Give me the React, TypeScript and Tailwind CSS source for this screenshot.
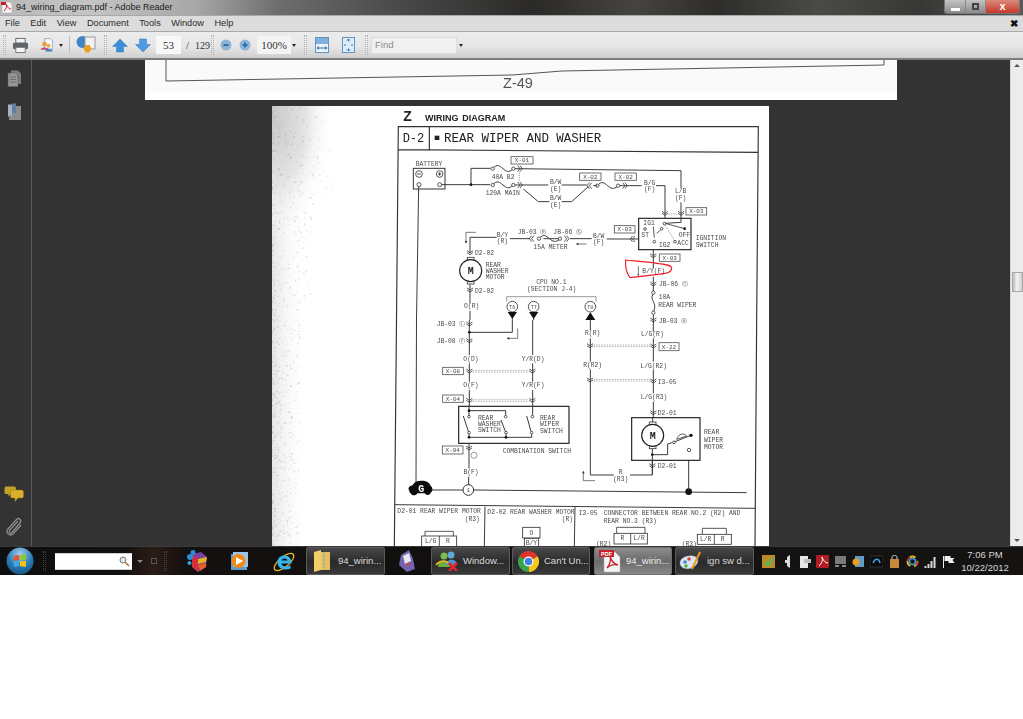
import React from "react";

const S = "#3a3a3a";

function L({ d, w = 3, c = S, dash }: { d: string; w?: number; c?: string; dash?: string }) {
  return <path d={d} fill="none" stroke={c} strokeWidth={w} strokeDasharray={dash} />;
}
function T({ x, y, s = 19, c = "#4a4a4a", a, b, children }: { x: number; y: number; s?: number; c?: string; a?: "middle"; b?: boolean; children: React.ReactNode }) {
  return (
    <text x={x} y={y} fontSize={s} fill={c} textAnchor={a} fontWeight={b ? 700 : 400}>
      {children}
    </text>
  );
}
function Box({ x, y, w = 62, h = 22, t }: { x: number; y: number; w?: number; h?: number; t: string }) {
  return (
    <g>
      <rect x={x} y={y} width={w} height={h} fill="#fff" stroke="#555" strokeWidth={2.5} />
      <T x={x + w / 2} y={y + h / 2 + 6} s={18} a="middle">{t}</T>
    </g>
  );
}
function CV({ x, y }: { x: number; y: number }) {
  return <L w={2.5} d={`M${x - 9} ${y - 6}L${x} ${y}L${x + 9} ${y - 6}M${x - 9} ${y}L${x} ${y + 6}L${x + 9} ${y}`} />;
}
function CL({ x, y }: { x: number; y: number }) {
  return <L w={2.5} d={`M${x} ${y - 9}L${x - 7} ${y}L${x} ${y + 9}M${x + 7} ${y - 9}L${x} ${y}L${x + 7} ${y + 9}`} />;
}
function CR({ x, y }: { x: number; y: number }) {
  return <L w={2.5} d={`M${x} ${y - 9}L${x + 7} ${y}L${x} ${y + 9}M${x - 7} ${y - 9}L${x} ${y}L${x - 7} ${y + 9}`} />;
}
function O({ x, y, r = 5, f = "#fff", w = 2.5 }: { x: number; y: number; r?: number; f?: string; w?: number }) {
  return <circle cx={x} cy={y} r={r} fill={f} stroke={S} strokeWidth={w} />;
}
function Dot({ x, y, r = 4 }: { x: number; y: number; r?: number }) {
  return <circle cx={x} cy={y} r={r} fill="#111" />;
}
function Fuse({ a, b, y }: { a: number; b: number; y: number }) {
  const m = (a + b) / 2;
  return (
    <g>
      <L d={`M${a} ${y}C${a + 14} ${y - 16} ${m - 10} ${y - 8} ${m} ${y}S${b - 14} ${y + 14} ${b} ${y}`} />
      <O x={a} y={y} />
      <O x={b} y={y} />
    </g>
  );
}
function Motor({ x, y }: { x: number; y: number }) {
  return (
    <g>
      <rect x={x - 10} y={y - 40} width={20} height={12} fill="#fff" stroke={S} strokeWidth={2.5} />
      <rect x={x - 10} y={y + 28} width={20} height={12} fill="#fff" stroke={S} strokeWidth={2.5} />
      <circle cx={x} cy={y} r={33} fill="#fff" stroke="#222" strokeWidth={3.5} />
      <T x={x} y={y + 11} s={30} c="#222" a="middle" b>M</T>
    </g>
  );
}

const speck: { x: number; y: number; r: number; o: number }[] = (() => {
  let seed = 12345;
  const rnd = () => {
    seed = (seed * 1103515245 + 12345) & 0x7fffffff;
    return seed / 0x7fffffff;
  };
  const out: { x: number; y: number; r: number; o: number }[] = [];
  for (let i = 0; i < 1100; i++) {
    const y = 106 + rnd() * 440;
    const spread = y < 200 ? 60 : y < 300 ? 42 : 28;
    const x = 272 + Math.pow(rnd(), 1.9) * spread;
    out.push({ x, y, r: 0.4 + rnd() * 0.6, o: 0.08 + rnd() * 0.16 });
  }
  return out;
})();

function Diagram() {
  return (
    <svg viewBox="272 106 497 440" className="w-full h-full font-['Liberation_Mono'] blur-[0.4px]">
      <defs>
        <radialGradient id="grain">
          <stop offset="0" stopColor="#c8c8c8" />
          <stop offset="0.55" stopColor="#e4e4e4" />
          <stop offset="1" stopColor="#ffffff" stopOpacity="0" />
        </radialGradient>
        <linearGradient id="band" x1="0" y1="0" x2="1" y2="0">
          <stop offset="0" stopColor="#e6e6e6" />
          <stop offset="1" stopColor="#ffffff" stopOpacity="0" />
        </linearGradient>
      </defs>
      <rect x="272" y="106" width="34" height="440" fill="url(#band)" />
      <ellipse cx="272" cy="120" rx="62" ry="120" fill="url(#grain)" />
      {speck.map((p, i) => (
        <circle key={i} cx={p.x} cy={p.y} r={p.r} fill="#777" opacity={p.o} />
      ))}
      <g transform="translate(390 105) scale(0.33333)">
        <text x="40" y="47" fontSize="42" fontWeight="700" fill="#222" fontFamily="Liberation Sans">Z</text>
        <text x="105" y="47" fontSize="27" fontWeight="700" fill="#222" fontFamily="Liberation Sans" wordSpacing="4">WIRING DIAGRAM</text>
        <L d="M1100 645L1105 65H25L19.500 645M24 134L1105 142M118 65V134" w={3.5} c="#333" />
        <T x={38} y={111} s={36} c="#222">D-2</T>
        <rect x="134" y="92" width="14" height="13" fill="#222" />
        <T x={162} y={112} s={37.5} c="#222">REAR WIPER AND WASHER</T>

        <T x={117} y={182} a="middle">BATTERY</T>
        <rect x="70" y="190" width="95" height="62" fill="#fff" stroke="#333" strokeWidth={3} />
        <O x={87} y={207} r={10} />
        <O x={149} y={207} r={10} />
        <L d="M82 207H92M144 207H154M149 202V212" />
        <O x={87} y={239} r={6} />
        <O x={149} y={239} r={6} />
        <L d="M86 245L79.500 645" />
        <L d="M155 239H300M243 239V190H302" />
        <Dot x={243} y={239} />
        <Fuse a={308} b={370} y={191} />
        <Fuse a={308} b={370} y={240} />
        <L d="M375 191L873 197V352L825 355" />
        <CR x={390} y={191} />
        <CR x={390} y={240} />
        <L d="M388 202V230" w={2} c="#777" dash="4 3" />
        <T x={305} y={222}>40A B2</T>
        <T x={287} y={270}>120A MAIN</T>
        <Box x={363} y={155} w={66} t="X-01" />
        <L d="M375 240H475M515 240H590M400 252L445 290H478M515 290H545L595 245" />
        <T x={497} y={236} a="middle">B/W</T>
        <T x={497} y={257} a="middle">(E)</T>
        <T x={497} y={286} a="middle">B/W</T>
        <T x={497} y={306} a="middle">(E)</T>
        <CL x={598} y={242} />
        <Fuse a={622} b={684} y={242} />
        <CR x={705} y={242} />
        <L d="M610 242H622M690 242H755M798 242H825V355" />
        <T x={779} y={240} a="middle">B/G</T>
        <T x={779} y={259} a="middle">(F)</T>
        <Box x={569} y={204} w={64} t="X-02" />
        <Box x={675} y={204} w={64} t="X-02" />
        <rect x="852" y="250" width="40" height="42" fill="#fff" />
        <T x={872} y={263} a="middle">L/B</T>
        <T x={872} y={286} a="middle">(F)</T>
        <CV x={825} y={325} />
        <CV x={873} y={325} />
        <L d="M836 327H862" w={2} c="#777" dash="4 3" />
        <Box x={888} y={308} t="X-03" />
        <rect x="746" y="340" width="157" height="94" fill="#fff" stroke="#222" strokeWidth={3.5} />
        <L d="M873 340V352L825 355" />
        <L d="M825 355L884 371M790 365L793 398M815 372L800 385" w={2.5} />
        <L d="M825 360L855 408" w={2} c="#666" dash="5 4" />
        <Dot x={884} y={371} />
        <O x={823} y={356} r={4} />
        <O x={765} y={372} r={4} />
        <O x={815} y={371} r={4} />
        <O x={793} y={410} r={4} />
        <O x={855} y={410} r={4} />
        <T x={760} y={360}>IG1</T>
        <T x={754} y={395}>ST</T>
        <T x={866} y={396}>OFF</T>
        <T x={807} y={426}>IG2</T>
        <T x={862} y={421}>ACC</T>
        <T x={917} y={404}>IGNITION</T>
        <T x={917} y={427}>SWITCH</T>
        <Box x={673} y={362} t="X-03" />

        <L d="M240 445V397H320M360 401H420M460 401H510M540 401H605M650 402H746" />
        <T x={337} y={395} a="middle">B/Y</T>
        <T x={337} y={414} a="middle">(R)</T>
        <T x={383} y={386}>JB-03 Ⓡ</T>
        <T x={490} y={386}>JB-06 Ⓢ</T>
        <CL x={425} y={401} />
        <Fuse a={447} b={510} y={401} />
        <CR x={530} y={401} />
        <T x={430} y={432}>15A METER</T>
        <T x={626} y={398} a="middle">B/W</T>
        <T x={626} y={417} a="middle">(F)</T>
        <CL x={728} y={402} />
        <L d="M258 382H228V410" w={2} />
        <path d="M224 408H232L228 416Z" fill="#333" />
        <L d="M590 417H563" w={2} />
        <path d="M565 413V421L557 417Z" fill="#333" />

        <CV x={240} y={443} />
        <T x={255} y={450}>D2-02</T>
        <Motor x={242} y={497} />
        <CV x={240} y={555} />
        <T x={255} y={564}>D2-02</T>
        <T x={287} y={486}>REAR</T>
        <T x={287} y={505}>WASHER</T>
        <T x={287} y={523}>MOTOR</T>
        <L d="M240 538V595M240 618V645" />
        <T x={245} y={610} a="middle">O(R)</T>
        <T x={484} y={538} a="middle">CPU NO.1</T>
        <T x={485} y={559} a="middle">(SECTION J-4)</T>
        <L d="M350 590V575H618V590" w={2} c="#666" />
        {[[367, "T6"], [431, "T7"], [601, "T8"]].map(([x, t]) => (
          <g key={t as string}>
            <circle cx={x as number} cy={605} r={16} fill="#fff" stroke="#333" strokeWidth={2.5} />
            <T x={x as number} y={611} s={15} a="middle">{t as string}</T>
          </g>
        ))}
        <path d="M353 621H381L367 642ZM417 621H445L431 642ZM601 622L616 645H586Z" fill="#111" />
        <L d="M367 640V645M431 640V645" />

        <L d="M790 434V490M790 515V560M790 628V645" />
        <CV x={790} y={452} />
        <Box x={808} y={447} t="X-03" />
        <path d="M707 465C735 468 770 470 800 475C825 478 842 480 845 488C845 498 838 503 825 505C790 510 745 515 720 518C712 508 705 490 707 465Z" fill="none" stroke="#f01c25" strokeWidth={3.5} />
        <T x={757} y={503}>B/Y(F)</T>
        <L d="M745 483V510" w={2} />
        <path d="M742 508H748L745 514Z" fill="#333" />
        <CV x={790} y={537} />
        <T x={807} y={543}>JB-06 Ⓒ</T>
        <L d="M790 567C775 585 805 590 790 622" />
        <O x={790} y={563} />
        <O x={790} y={623} />
        <T x={806} y={583}>10A</T>
        <T x={805} y={606}>REAR WIPER</T>
        <CV x={790} y={645} />
        <T x={806} y={653}>JB-03 Ⓚ</T>
      </g>

      <g transform="translate(390 320) scale(0.33333)">
        <L d="M19.500 0L13 680M1100 0L1095 680" w={3.5} c="#333" />
        <L d="M79.500 0L78 505" />
        <path d="M58 512C52 505 58 498 68 496C74 484 82 482 96 482C112 482 120 490 122 498C130 502 128 516 122 518C118 528 108 526 104 520H82C78 528 66 528 62 520C60 518 58 516 58 512Z" fill="#0a0a0a" />
        <T x={94} y={516} s={30} c="#fff" a="middle" b>G</T>
        <L d="M125 510H220M250 510L1070 518" />
        <circle cx={235} cy={510} r={16} fill="#fff" stroke="#333" strokeWidth={3} />
        <T x={235} y={516} s={16} a="middle">1</T>
        <Dot x={896} y={515} r={10} />
        <L d="M896 395V510" />
        <L d="M15 554L1095 565M285 560L283 680M555 561L553 680" w={3} />

        <T x={140} y={18}>JB-03 Ⓛ</T>
        <T x={140} y={69}>JB-08 Ⓕ</T>
        <L d="M238 0V105M238 130V185M238 210V290M238 37H367V0M428 0V105M428 130V185M428 210V285" />
        <CV x={238} y={12} />
        <Dot x={238} y={37} />
        <CV x={238} y={62} />
        <L d="M383 25V55H356" w={2} />
        <path d="M358 51V59L350 55Z" fill="#333" />
        <T x={220} y={122}>O(D)</T>
        <T x={395} y={123}>Y/R(D)</T>
        <Box x={158} y={142} t="X-08" />
        <CV x={238} y={153} />
        <CV x={427} y={153} />
        <L d="M248 151H418M248 156H418" w={1.8} c="#888" dash="5 3" />
        <T x={220} y={201}>O(F)</T>
        <T x={395} y={202}>Y/R(F)</T>
        <Box x={158} y={225} t="X-04" />
        <CV x={238} y={241} />
        <CV x={427} y={241} />
        <L d="M248 239H418M248 244H418" w={1.8} c="#888" dash="5 3" />
        <rect x="206" y="259" width="331" height="111" fill="#fff" stroke="#222" strokeWidth={3.5} />
        <L d="M237 259V286M237 342V352M237 272H347V286M428 259V286M237 352H425V342M348 342V352" />
        <Dot x={237} y={272} />
        <Dot x={237} y={352} />
        <Dot x={348} y={352} />
        <O x={237} y={290} r={4} />
        <O x={347} y={290} r={4} />
        <O x={427} y={290} r={4} />
        <O x={237} y={338} r={4} />
        <O x={348} y={338} r={4} />
        <O x={425} y={338} r={4} />
        <L d="M220 288L235 334M333 300L346 334M410 288L423 334" />
        <T x={264} y={300}>REAR</T>
        <T x={264} y={318}>WASHER</T>
        <T x={264} y={337}>SWITCH</T>
        <T x={450} y={301}>REAR</T>
        <T x={450} y={319}>WIPER</T>
        <T x={450} y={339}>SWITCH</T>
        <Box x={157} y={378} h={24} t="X-04" />
        <L d="M237 370V445M236 470V495" />
        <CV x={237} y={384} />
        <circle cx={252} cy={406} r={9} fill="#fff" stroke="#666" strokeWidth={2} />
        <T x={338} y={399}>COMBINATION SWITCH</T>
        <T x={243} y={462} a="middle">B(F)</T>

        <L d="M601 0V30M601 55V125M601 148V465H672M790 0V35M790 55V125M790 150V220M790 245V305M787 392V465H720" />
        <T x={608} y={46} a="middle">R(R)</T>
        <T x={787} y={48} a="middle">L/G(R)</T>
        <CV x={600} y={77} />
        <CV x={790} y={78} />
        <L d="M610 75H780M610 80H780" w={1.8} c="#888" dash="5 3" />
        <Box x={807} y={68} w={60} h={24} t="X-22" />
        <T x={608} y={141} a="middle">R(R2)</T>
        <T x={791} y={143} a="middle">L/G(R2)</T>
        <CV x={600} y={180} />
        <CV x={790} y={183} />
        <L d="M610 178H780M610 183H780" w={1.8} c="#888" dash="5 3" />
        <T x={803} y={191}>I3-05</T>
        <T x={792} y={238} a="middle">L/G(R3)</T>
        <CV x={790} y={278} />
        <T x={803} y={286}>D2-01</T>
        <rect x="725" y="293" width="205" height="128" fill="#fff" stroke="#222" strokeWidth={3.5} />
        <L d="M788 293V307" />
        <Motor x={788} y={346} />
        <Dot x={787} y={404} />
        <L d="M787 386V465M787 404H833V372L850 367L905 345" />
        <path d="M860 358C866 340 882 338 890 348Z" fill="#fff" stroke={S} strokeWidth={2.5} />
        <O x={852} y={367} r={4} />
        <Dot x={903} y={346} r={5} />
        <O x={897} y={390} r={5} />
        <T x={942} y={343}>REAR</T>
        <T x={942} y={365}>WIPER</T>
        <T x={942} y={387}>MOTOR</T>
        <CV x={787} y={437} />
        <T x={803} y={443}>D2-01</T>
        <T x={692} y={463} a="middle">R</T>
        <T x={692} y={482} a="middle">(R3)</T>
        <L d="M580 458V482H615" w={2} />
        <path d="M576 460H584L580 452Z" fill="#333" />

        <T x={22} y={580}>D2-01 REAR WIPER MOTOR</T>
        <T x={224} y={602}>(R3)</T>
        <T x={292} y={581}>D2-02 REAR WASHER MOTOR</T>
        <T x={515} y={604}>(R)</T>
        <T x={566} y={584}>I3-05</T>
        <T x={641} y={585}>CONNECTOR BETWEEN REAR NO.2 (R2) AND</T>
        <T x={641} y={609}>REAR NO.3 (R3)</T>

        <L d="M105 648V634H190V648" w={2.5} />
        <rect x="95" y="648" width="105" height="32" fill="#fff" stroke="#333" strokeWidth={2.5} />
        <L d="M148 648V680" w={2.5} />
        <T x={122} y={670} a="middle">L/G</T>
        <T x={174} y={670} a="middle">R</T>
        <rect x="398" y="622" width="52" height="32" fill="#fff" stroke="#333" strokeWidth={2.5} />
        <T x={424} y={644} a="middle">O</T>
        <rect x="403" y="655" width="43" height="25" fill="#fff" stroke="#333" strokeWidth={2.5} />
        <T x={424} y={675} a="middle">B/Y</T>
        <L d="M680 640V622H765V640" w={2.5} />
        <rect x="672" y="640" width="100" height="32" fill="#fff" stroke="#333" strokeWidth={2.5} />
        <L d="M722 640V672" w={2.5} />
        <T x={697} y={661} a="middle">R</T>
        <T x={747} y={661} a="middle">L/R</T>
        <T x={618} y={677}>(R2)</T>
        <L d="M937 643V625H1009V643" w={2.5} />
        <rect x="922" y="643" width="102" height="30" fill="#fff" stroke="#333" strokeWidth={2.5} />
        <L d="M973 643V673" w={2.5} />
        <T x={947} y={664} a="middle">L/R</T>
        <T x={998} y={664} a="middle">R</T>
        <T x={875} y={678}>(R3)</T>
      </g>
    </svg>
  );
}

function FirstPage() {
  return (
    <svg viewBox="145 60 752 40" className="w-full h-full font-['Liberation_Sans'] blur-[0.4px]">
      <rect x="145" y="60" width="752" height="32" fill="#fafafa" />
      <path d="M166 60V81L512 75L562 71L884 65V60" fill="none" stroke="#555" strokeWidth="1" />
      <text x="518" y="88" fontSize="14.500" fill="#555" textAnchor="middle">Z-49</text>
    </svg>
  );
}

function Grip() {
  return <div className="w-[3px] h-[20px] shrink-0 border-x border-dotted border-[#b4b4b4]" />;
}
function Caret() {
  return <div className="w-0 h-0 border-x-[2.5px] border-t-[3px] border-x-transparent border-t-[#222]" />;
}

function Toolbar() {
  return (
    <div className="h-[28px] flex items-center bg-[linear-gradient(180deg,#ececec,#e6e6e6_55%,#cfcfcf)] border-b-2 border-[#7b7b7b] font-['Liberation_Serif'] text-[11px] text-[#333] pl-[3px]">
      <Grip />
      <svg width="17" height="16" viewBox="0 0 18 17" className="ml-[6px] shrink-0">
        <rect x="4" y="1.500" width="10" height="5" fill="#f2f2f2" stroke="#666" />
        <rect x="1" y="6" width="16" height="7" rx="1.500" fill="#5e656c" />
        <rect x="4" y="11" width="10" height="5.500" fill="#f6f6f6" stroke="#777" />
      </svg>
      <svg width="16" height="16" viewBox="0 0 20 18" className="ml-[10px] shrink-0">
        <path d="M7 1H14L17 4V14H7Z" fill="#f4f7fb" stroke="#8aa0b8" />
        <circle cx="7" cy="8" r="3" fill="#e9a23b" />
        <path d="M2 15C2 11 12 11 12 15Z" fill="#c54a6b" />
        <circle cx="12" cy="10" r="2.500" fill="#e9b04b" />
        <path d="M8 17C8 13 17 13 17 17Z" fill="#3f7fc4" />
      </svg>
      <div className="ml-[4px]"><Caret /></div>
      <div className="ml-[6px] w-px h-[18px] bg-[#bdbdbd]" />
      <svg width="20" height="20" viewBox="0 0 20 20" className="ml-[6px] shrink-0">
        <circle cx="6.500" cy="7" r="6" fill="#3f86c9" />
        <rect x="9" y="2" width="10" height="12" fill="#f2f2f2" stroke="#999" />
        <path d="M9.500 10L13.500 10L15.500 13.500L13.500 17.500H9.500L7.500 13.500Z" fill="#f0a020" />
      </svg>
      <div className="ml-[8px]"><Grip /></div>
      <svg width="16" height="15" viewBox="0 0 16 15" className="ml-[5px] shrink-0">
        <path d="M8 1L15.500 8.500H11.500V14H4.500V8.500H0.500Z" fill="#3d8fd6" stroke="#2f78ba" strokeWidth="0.500" />
      </svg>
      <svg width="16" height="15" viewBox="0 0 16 15" className="ml-[7px] shrink-0">
        <path d="M8 14L15.500 6.500H11.500V1H4.500V6.500H0.500Z" fill="#4b9be0" stroke="#2f78ba" strokeWidth="0.500" />
      </svg>
      <div className="ml-[5px] w-[25px] h-[18px] bg-[#f8f8f8] flex items-center justify-center">53</div>
      <span className="ml-[5px] w-[3px]">/</span>
      <span className="ml-[6px] w-[14px] text-[10px]">129</span>
      <div className="ml-[2px]"><Grip /></div>
      <svg width="12" height="12" viewBox="0 0 12 12" className="ml-[6px] shrink-0">
        <circle cx="6" cy="6" r="5.500" fill="#8fb4d8" />
        <rect x="3.500" y="5" width="5" height="2" fill="#2f6fa8" />
      </svg>
      <svg width="12" height="12" viewBox="0 0 12 12" className="ml-[7px] shrink-0">
        <circle cx="6" cy="6" r="5.500" fill="#8fb4d8" />
        <path d="M3.500 5H5V3.500H7V5H8.500V7H7V8.500H5V7H3.500Z" fill="#2f6fa8" />
      </svg>
      <div className="ml-[6px] w-[34px] h-[18px] bg-[#f4f4f4] flex items-center justify-center">100%</div>
      <div className="ml-[1px]"><Caret /></div>
      <div className="ml-[8px]"><Grip /></div>
      <svg width="14" height="16" viewBox="0 0 14 16" className="ml-[8px] shrink-0">
        <rect x="0.500" y="0.500" width="13" height="15" fill="#eef3f8" stroke="#5f94c4" />
        <rect x="1" y="1" width="12" height="6" fill="#7fb0dc" />
        <path d="M2 11H12M2 11L4 9.500M2 11L4 12.500M12 11L10 9.500M12 11L10 12.500" stroke="#2f6fa8" fill="none" />
      </svg>
      <svg width="13" height="16" viewBox="0 0 13 16" className="ml-[13px] shrink-0">
        <rect x="0.500" y="0.500" width="12" height="15" fill="#dcebf7" stroke="#5f94c4" />
        <path d="M6.500 2V4.500M6.500 14V11.500M2 8H4M11 8H9M5 3.500L6.500 2L8 3.500M5 12.500L6.500 14L8 12.500" stroke="#2f78ba" fill="none" />
      </svg>
      <div className="ml-[10px]"><Grip /></div>
      <div className="ml-[3px] w-[86px] h-[17px] bg-[#f0f0f0] border border-[#dcdcdc] flex items-center pl-[3px] font-['Liberation_Sans'] text-[#8a8a8a] text-[9.500px]">Find</div>
      <div className="ml-[2px]"><Caret /></div>
    </div>
  );
}

function Rail() {
  return (
    <div className="w-[32px] shrink-0 bg-[#333333] border-r border-[#5a5a5a] flex flex-col items-center pr-[3px]">
      <svg width="15" height="17" viewBox="0 0 15 17" className="mt-[10px]">
        <path d="M4 0.500H11L14 3.500V14H4Z" fill="#7e7e7e" />
        <path d="M1 3H9L11 5.500V16.500H1Z" fill="#989898" stroke="#5c5c5c" strokeWidth="0.600" />
        <path d="M3 7H9M3 9.500H9M3 12H9" stroke="#6e6e6e" />
      </svg>
      <svg width="15" height="18" viewBox="0 0 15 18" className="mt-[16px]">
        <path d="M2 3H14V17H2Z" fill="#8c8c8c" />
        <path d="M5 0.500H9V11L7 9L5 11Z" fill="#5f7f9f" />
        <path d="M1 1.500H5V14L3 12L1 14Z" fill="#a7b3bf" />
      </svg>
      <svg width="20" height="16" viewBox="0 0 20 16" className="mt-[365px]">
        <path d="M2 0.500H10C11.500 0.500 12 1.500 12 2.500V6C12 7.500 11 8 10 8H7L4.500 10.500V8H2C1 8 0.500 7.500 0.500 6V2.500C0.500 1.500 1 0.500 2 0.500Z" fill="#c6a024" />
        <path d="M8 4H18C19 4 19.500 5 19.500 6V10C19.500 11 19 12 18 12H14L11 15.500V12H8C7 12 6.500 11 6.500 10V6C6.500 5 7 4 8 4Z" fill="#d8b02c" stroke="#8d711c" strokeWidth="0.500" />
      </svg>
      <svg width="18" height="20" viewBox="0 0 18 20" className="mt-[14px]">
        <path d="M13 5L5 14C3 17 6 18 7.500 16L15 7C17 4 14 1 11.500 3.500L3 13C0 17 5 21 8.500 17.500L16 9" fill="none" stroke="#8b8b8b" strokeWidth="1.300" />
      </svg>
      <div className="flex-1" />
    </div>
  );
}

function Scrollbar() {
  return (
    <div className="w-[13px] shrink-0 bg-[#ececec] border-l border-[#d4d4d4] flex flex-col items-center">
      <div className="mt-[4px] w-0 h-0 border-x-[3px] border-b-[3px] border-x-transparent border-b-[#555]" />
      <div className="mt-[205px] w-[11px] h-[20px] border border-[#a8a8a8] bg-[linear-gradient(90deg,#bdbdbd,#f4f4f4_45%,#cfcfcf)]" />
      <div className="flex-1" />
      <div className="mb-[4px] w-0 h-0 border-x-[3px] border-t-[3px] border-x-transparent border-t-[#555]" />
    </div>
  );
}

function TaskBtn({ w, active, children, label, ml = 0 }: { w: number; active?: boolean; children: React.ReactNode; label: string; ml?: number }) {
  return (
    <div
      style={{ width: w, marginLeft: ml }}
      className={
        "h-[28px] shrink-0 rounded-[2px] border flex items-center gap-[3px] pl-[2px] text-[9.500px] font-['Liberation_Sans'] " +
        (active
          ? "border-[#6f6f6f] bg-[linear-gradient(180deg,#8d8d8d,#6b6b6b_50%,#878787)] text-[#ececec]"
          : "border-[#5a5a5a] bg-[linear-gradient(180deg,#484848,#2a2a2a_55%,#3a3a3a)] text-[#dcdcdc]")
      }
    >
      <div className="w-[26px] flex justify-center shrink-0">{children}</div>
      <span className="whitespace-nowrap">{label}</span>
    </div>
  );
}

function Taskbar() {
  return (
    <div className="h-[29px] shrink-0 flex items-center bg-[linear-gradient(90deg,#0e0e0e,#101010_12%,#2c1c16_15%,#141010_18%,#0e0e0e)] border-t border-[#3a3a3a]">
      <svg width="28" height="28" viewBox="0 0 28 28" className="ml-[6px] shrink-0">
        <defs>
          <radialGradient id="orb" cx="0.5" cy="0.25" r="0.85">
            <stop offset="0" stopColor="#a6d0ee" />
            <stop offset="0.5" stopColor="#2f7fb8" />
            <stop offset="1" stopColor="#0e4a78" />
          </radialGradient>
        </defs>
        <circle cx="14" cy="14" r="13.500" fill="url(#orb)" />
        <path d="M8 9L13 8V13L7.500 13.500Z" fill="#e8552a" />
        <path d="M14 8L20 7V13L14 13Z" fill="#8cc63f" />
        <path d="M7.500 14.500L13 14V19L8 20Z" fill="#3fa8e0" />
        <path d="M14 14L20 14V20L14 19Z" fill="#f6c21c" />
      </svg>
      <div className="ml-[9px] w-[3px] h-[20px] shrink-0 border-x border-dotted border-[#444]" />
      <div className="ml-[9px] w-[77px] h-[17px] shrink-0 bg-white flex items-center justify-end pr-[2px] border-y border-[#cfcfcf]">
        <svg width="11" height="11" viewBox="0 0 11 11">
          <circle cx="4" cy="4" r="3" fill="#dbe6ee" stroke="#777" />
          <path d="M6.500 6.500L10 10" stroke="#a5793c" strokeWidth="1.600" />
        </svg>
      </div>
      <div className="ml-[5px] w-0 h-0 shrink-0 border-x-[3px] border-t-[3px] border-x-transparent border-t-[#888]" />
      <div className="ml-[8px] w-[6px] h-[6px] shrink-0 border border-[#555]" />
      <div className="ml-[7px] w-[3px] h-[20px] shrink-0 border-x border-dotted border-[#444]" />
      <svg width="22" height="23" viewBox="0 0 22 23" className="ml-[19px] shrink-0">
        <path d="M6 4L15 2L21 7L20 17L12 22L6 17Z" fill="#7b3fa0" />
        <path d="M6 4L12 9L12 22L6 17Z" fill="#d62f3a" />
        <path d="M12 9L21 7L20 12L12 14Z" fill="#e8b21c" />
        <path d="M12 15L20 13L20 17L14 21Z" fill="#e8601c" />
        <circle cx="4" cy="7" r="3" fill="#2a8fd8" />
        <circle cx="7" cy="2.500" r="2.500" fill="#2a8fd8" />
        <circle cx="3.500" cy="13" r="2" fill="#35a0e0" />
      </svg>
      <svg width="20" height="20" viewBox="0 0 20 20" className="ml-[21px] shrink-0">
        <rect x="2" y="3" width="16" height="16" fill="#5f9ccc" />
        <rect x="4" y="1" width="15" height="15" fill="#9bc5e4" />
        <circle cx="9.500" cy="10" r="7" fill="#f28a1a" />
        <path d="M7 6L14 10L7 14Z" fill="#fff" />
      </svg>
      <svg width="24" height="24" viewBox="0 0 24 24" className="ml-[23px] shrink-0">
        <ellipse cx="12" cy="13" rx="12" ry="5" transform="rotate(-40 12 13)" fill="none" stroke="#e8b820" strokeWidth="1.300" />
        <path d="M5.500 13.500C5.500 9 8.500 6.500 12.500 6.500C17 6.500 19.500 9.500 19.500 14.500H9.500C10 18 15 18.500 18.500 16L18.500 19.500C13 22 5.500 20 5.500 13.500ZM9.500 11.500H15.500C15 8.800 10 8.800 9.500 11.500Z" fill="#35b6ea" fillRule="evenodd" />
      </svg>
      <TaskBtn w={79} ml={10} label="94_wirin...">
        <svg width="18" height="24" viewBox="0 0 18 24">
          <path d="M1 3L8 1V21L1 23Z" fill="#f0cf6a" />
          <path d="M8 3H17V21H8Z" fill="#e8c05a" />
          <path d="M11 3V21" stroke="#9bb0c4" strokeWidth="2" strokeDasharray="2 1.500" />
        </svg>
      </TaskBtn>
      <svg width="20" height="24" viewBox="0 0 20 24" className="ml-[12px] shrink-0">
        <path d="M4 6L12 1L16 10L18 20L10 23L2 16Z" fill="#7265ad" />
        <path d="M6 7L12 4L14 12L8 15Z" fill="#e6e6f2" />
        <path d="M8 15L13 13L12 18Z" fill="#c7465c" />
      </svg>
      <TaskBtn w={79} ml={14} label="Window...">
        <svg width="24" height="20" viewBox="0 0 24 20">
          <circle cx="9" cy="5" r="3.500" fill="#7cbc4a" />
          <path d="M3 16C3 8 15 8 15 16Z" fill="#6cae3e" />
          <circle cx="16" cy="4" r="3.500" fill="#5fa8dc" />
          <path d="M11 14C11 7 22 7 22 14Z" fill="#4d96cc" />
          <path d="M1 14C5 9 11 9 13 12" stroke="#e8c020" strokeWidth="1.600" fill="none" />
          <path d="M14 12L22 20M22 12L14 20" stroke="#e0242a" strokeWidth="2.500" />
        </svg>
      </TaskBtn>
      <TaskBtn w={78} ml={2} label="Can't Un...">
        <svg width="21" height="21" viewBox="0 0 21 21">
          <path d="M10.500 10.500L1.400 5.250A10.500 10.500 0 0 1 19.600 5.250Z" fill="#e0352b" />
          <path d="M10.500 10.500L19.600 5.250A10.500 10.500 0 0 1 10.500 21Z" fill="#f6c71c" />
          <path d="M10.500 10.500L10.500 21A10.500 10.500 0 0 1 1.400 5.250Z" fill="#3aa24a" />
          <circle cx="10.500" cy="10.500" r="5" fill="#fff" />
          <circle cx="10.500" cy="10.500" r="3.800" fill="#3d83e0" />
        </svg>
      </TaskBtn>
      <TaskBtn w={78} ml={4} active label="94_wirin...">
        <svg width="24" height="24" viewBox="0 0 24 24">
          <path d="M6 3H17L22 8V23H6Z" fill="#f4f4f4" stroke="#aaa" strokeWidth="0.500" />
          <path d="M9 19C12 15 13 10 12 7C13 11 16 15 20 16C15 15 12 16 9 19Z" fill="none" stroke="#c8202a" strokeWidth="1.300" />
          <rect x="1" y="1" width="15" height="7" fill="#c8202a" />
          <text x="8.500" y="7" fontSize="5.500" fontWeight="700" fill="#fff" textAnchor="middle" fontFamily="Liberation Sans">PDF</text>
        </svg>
      </TaskBtn>
      <TaskBtn w={79} ml={3} label="ign sw d...">
        <svg width="24" height="24" viewBox="0 0 24 24">
          <path d="M1 14C1 9 8 6 14 7C20 8 20 14 16 17C12 21 1 21 1 14Z" fill="#dbe6f2" stroke="#9cb0c8" strokeWidth="0.500" />
          <circle cx="6" cy="13" r="1.800" fill="#3f86c9" />
          <circle cx="10" cy="10" r="1.800" fill="#d8423a" />
          <circle cx="7" cy="17" r="1.800" fill="#5fae48" />
          <path d="M13 20L21 3" stroke="#e89a20" strokeWidth="2" />
        </svg>
      </TaskBtn>
      <div className="flex-1 flex items-center h-full bg-[#141312] pl-[8px]">
        <div className="flex items-center gap-[5px] w-[192px] shrink-0">
          <svg width="13" height="13" viewBox="0 0 13 13" className="shrink-0">
            <rect width="13" height="13" fill="#b98a2a" />
            <path d="M3 7L6 10L11 3" stroke="#3fc46a" strokeWidth="2" fill="none" />
          </svg>
          <svg width="13" height="13" viewBox="0 0 13 13" className="shrink-0">
            <path d="M5 5H7V2L10 0V13L7 11V8H5Z" fill="#dcdcdc" />
          </svg>
          <svg width="13" height="13" viewBox="0 0 13 13" className="shrink-0">
            <rect x="2" y="1" width="8" height="12" fill="#e6e6e6" />
            <rect x="6" y="4" width="7" height="4" fill="#bcbcbc" />
          </svg>
          <svg width="13" height="13" viewBox="0 0 13 13" className="shrink-0">
            <rect width="13" height="13" rx="1" fill="#b01e24" />
            <path d="M3 11C6 8 7 5 6 2C7 5 9 8 12 8" stroke="#fff" fill="none" />
          </svg>
          <svg width="13" height="13" viewBox="0 0 13 13" className="shrink-0">
            <rect x="1" y="1" width="11" height="8" fill="#7a7a7a" />
            <rect x="1" y="10" width="4" height="2" fill="#8a8a8a" />
            <rect x="8" y="10" width="4" height="2" fill="#8a8a8a" />
          </svg>
          <svg width="13" height="13" viewBox="0 0 13 13" className="shrink-0">
            <rect x="3" y="1" width="9" height="11" fill="#5f9ccc" />
            <circle cx="4" cy="7" r="3.500" fill="#e8a020" />
          </svg>
          <svg width="13" height="13" viewBox="0 0 13 13" className="shrink-0">
            <rect width="13" height="11" y="1" fill="#0a0a0a" stroke="#333" />
            <path d="M3 8C5 3 9 3 10 8" stroke="#3fa0e0" strokeWidth="1.500" fill="none" />
          </svg>
          <svg width="13" height="13" viewBox="0 0 13 13" className="shrink-0">
            <rect x="2" y="4" width="9" height="9" fill="#c48a3a" />
            <path d="M4 4V2C4 0 9 0 9 2V4" stroke="#d0d0d0" fill="none" />
          </svg>
          <svg width="13" height="13" viewBox="0 0 13 13" className="shrink-0">
            <circle cx="6.500" cy="6.500" r="5" fill="none" stroke="#e8c020" strokeWidth="1.800" strokeDasharray="6 4" />
            <circle cx="6.500" cy="6.500" r="5" fill="none" stroke="#d0302a" strokeWidth="1.800" strokeDasharray="4 12" />
            <circle cx="6.500" cy="6.500" r="3" fill="none" stroke="#3f9fe0" strokeWidth="1.500" />
          </svg>
          <svg width="13" height="13" viewBox="0 0 12 13" className="shrink-0">
            <path d="M0 11H2V13H0ZM3 9H5V13H3ZM6 6H8V13H6ZM9 2H11V13H9Z" fill="#d8d8d8" />
          </svg>
          <svg width="13" height="13" viewBox="0 0 12 13" className="shrink-0">
            <path d="M1 1V13" stroke="#eee" />
            <path d="M2 1H8V3H12L10 5L12 8H6V6H2Z" fill="#eee" />
          </svg>
        </div>
        <div className="w-[62px] text-center font-['Liberation_Sans'] text-[9.500px] leading-[13px] text-[#d6d6d6] whitespace-nowrap">
          <div>7:06 PM</div>
          <div>10/22/2012</div>
        </div>
      </div>
    </div>
  );
}

export default function App() {
  return (
    <div className="w-[1023px] h-[719px] bg-white overflow-hidden flex flex-col">
      <div className="h-[546px] shrink-0 flex flex-col">
        <div className="h-[15px] shrink-0 flex items-center bg-[linear-gradient(90deg,#b8b8b8_0%,#c4c4c4_9%,#a8a8a8_19%,#6e6e6e_27%,#4c4c4c_38%,#2b2a28_52%,#454440_62%,#2e2d2b_70%,#4a4a47_80%,#383735_90%,#585858_100%)] relative">
          <svg width="12" height="13" viewBox="0 0 12 13" className="ml-[1px] shrink-0">
            <path d="M1 1H9L11 3V12H1Z" fill="#f2f2f2" stroke="#aaa" strokeWidth="0.500" />
            <path d="M3 10C5 8 6 6 5.500 3.500C6 6 8 8 10 8" stroke="#c8202a" fill="none" />
            <rect x="0" y="1" width="5" height="3" fill="#c8202a" />
          </svg>
          <span className="ml-[3px] font-['Liberation_Sans'] text-[9px] text-[#1c1c1c]">94_wiring_diagram.pdf - Adobe Reader</span>
          <div className="absolute top-0 left-[944px] w-[76px] h-[14px] flex rounded-b-[3px] border border-t-0 border-[#777] overflow-hidden">
            <div className="w-[20px] flex items-end justify-center pb-[2px] bg-[linear-gradient(180deg,#c4c4c4,#8a8a8a)]"><div className="w-[9px] h-[3px] bg-white" /></div>
            <div className="w-[21px] flex items-center justify-center bg-[linear-gradient(180deg,#c4c4c4,#8a8a8a)] border-x border-[#888]"><div className="w-[7px] h-[7px] border-2 border-[#444]" /></div>
            <div className="flex-1 flex items-center justify-center bg-[linear-gradient(180deg,#d98a7a,#c8382a)] text-white text-[11px] leading-none font-bold font-['Liberation_Sans']">x</div>
          </div>
        </div>
        <div className="h-[17px] shrink-0 flex items-center justify-between bg-[#dcdcdc] border-y border-[#a8a8a8] pl-[5px] pr-[5px] font-['Liberation_Sans'] text-[9.200px] text-[#2a2a2a]">
          <div className="flex gap-[10.500px]">
            <span>File</span>
            <span>Edit</span>
            <span>View</span>
            <span>Document</span>
            <span>Tools</span>
            <span>Window</span>
            <span>Help</span>
          </div>
          <span className="font-bold text-[10px] text-[#111]">✖</span>
        </div>
        <Toolbar />
        <div className="flex-1 min-h-0 flex">
          <Rail />
          <div className="flex-1 min-w-0 bg-[#333333] flex flex-col items-center overflow-hidden">
            <div className="w-[752px] h-[40px] shrink-0 bg-white"><FirstPage /></div>
            <div className="w-[497px] h-[440px] shrink-0 mt-[6px] mr-[1px] bg-white"><Diagram /></div>
          </div>
          <Scrollbar />
        </div>
      </div>
      <Taskbar />
    </div>
  );
}
